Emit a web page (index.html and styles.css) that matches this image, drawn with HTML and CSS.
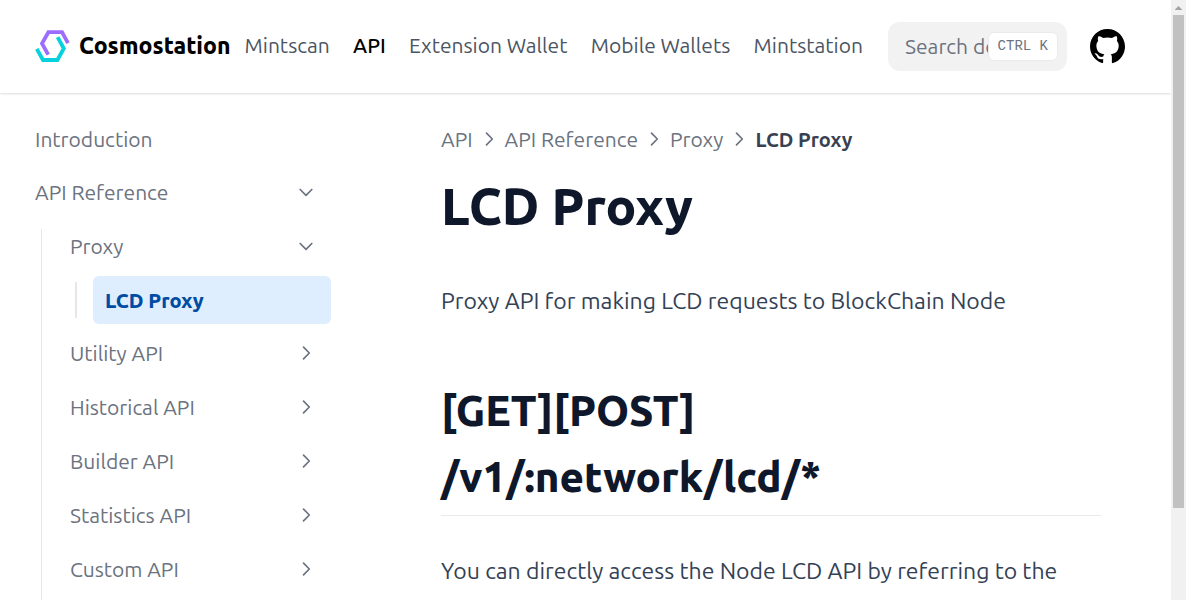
FILE: index.html
```html
<!DOCTYPE html>
<html lang="en">
<head>
<meta charset="utf-8">
<meta name="viewport" content="width=device-width, initial-scale=1">
<title>LCD Proxy – Cosmostation</title>
<link rel="stylesheet" href="styles.css">
</head>
<body>
<svg class="defs" aria-hidden="true">
  <symbol id="chevron" viewBox="0 0 24 24"><path d="M9 5l7 7-7 7" fill="none" stroke="currentColor" stroke-width="2" stroke-linecap="round" stroke-linejoin="round"/></symbol>
</svg>
<div class="page">
  <header class="topbar">
    <a class="brand" href="#">
      <svg class="brand-mark" viewBox="0 0 36 34" fill="none" stroke-width="3.8" aria-hidden="true">
        <path d="M13.2 25.6L7 14.5L13.4 3.2H27L33 14.2" stroke="#9c6cff"/>
        <path d="M1.8 19.8L8 31H22.4L28.8 19.5L22.6 8.2" stroke="#05d2dd"/>
      </svg>
      <span class="brand-name">Cosmostation</span>
    </a>
    <nav class="topnav" aria-label="Sections">
      <a href="#">Mintscan</a>
      <a class="current" href="#">API</a>
      <a href="#">Extension Wallet</a>
      <a href="#">Mobile Wallets</a>
      <a href="#">Mintstation</a>
    </nav>
    <div class="search">
      <input type="search" placeholder="Search documentation…" aria-label="Search documentation">
      <kbd>CTRL K</kbd>
    </div>
    <a class="github" href="#" aria-label="GitHub">
      <svg viewBox="0 0 16 16" fill="currentColor" aria-hidden="true"><path d="M8 0C3.58 0 0 3.58 0 8c0 3.54 2.29 6.53 5.47 7.59.4.07.55-.17.55-.38 0-.19-.01-.82-.01-1.49-2.01.37-2.53-.49-2.69-.94-.09-.23-.48-.94-.82-1.13-.28-.15-.68-.52-.01-.53.63-.01 1.08.58 1.23.82.72 1.21 1.87.87 2.33.66.07-.52.28-.87.51-1.07-1.78-.2-3.64-.89-3.64-3.95 0-.87.31-1.59.82-2.15-.08-.2-.36-1.02.08-2.12 0 0 .67-.21 2.2.82.64-.18 1.32-.27 2-.27s1.36.09 2 .27c1.53-1.04 2.2-.82 2.2-.82.44 1.1.16 1.92.08 2.12.51.56.82 1.27.82 2.15 0 3.07-1.87 3.75-3.65 3.95.29.25.54.73.54 1.48 0 1.07-.01 1.93-.01 2.2 0 .21.15.46.55.38A8.01 8.01 0 0 0 16 8c0-4.42-3.58-8-8-8z"/></svg>
    </a>
  </header>
  <div class="columns">
    <aside class="sidebar">
      <ul class="menu">
        <li><a class="item" href="#">Introduction</a></li>
        <li>
          <button class="item open" type="button" aria-expanded="true">API Reference<svg><use href="#chevron"/></svg></button>
          <ul class="menu sub">
            <li>
              <button class="item open" type="button" aria-expanded="true">Proxy<svg><use href="#chevron"/></svg></button>
              <ul class="menu leaf">
                <li><a class="item active" href="#" aria-current="page">LCD Proxy</a></li>
              </ul>
            </li>
            <li><button class="item" type="button">Utility API<svg><use href="#chevron"/></svg></button></li>
            <li><button class="item" type="button">Historical API<svg><use href="#chevron"/></svg></button></li>
            <li><button class="item" type="button">Builder API<svg><use href="#chevron"/></svg></button></li>
            <li><button class="item" type="button">Statistics API<svg><use href="#chevron"/></svg></button></li>
            <li><button class="item" type="button">Custom API<svg><use href="#chevron"/></svg></button></li>
          </ul>
        </li>
      </ul>
    </aside>
    <main class="article">
      <nav class="crumbs" aria-label="Breadcrumb">
        <span>API</span><svg><use href="#chevron"/></svg>
        <span>API Reference</span><svg><use href="#chevron"/></svg>
        <span>Proxy</span><svg><use href="#chevron"/></svg>
        <span class="here">LCD Proxy</span>
      </nav>
      <h1>LCD Proxy</h1>
      <p>Proxy API for making LCD requests to BlockChain Node</p>
      <h2>[GET][POST]<br>/v1/:network/lcd/*</h2>
      <p>You can directly access the Node LCD API by referring to the</p>
    </main>
  </div>
</div>
<div class="rail" aria-hidden="true"><div class="rail-arrow"></div><div class="rail-thumb"></div></div>
</body>
</html>
```
FILE: styles.css
```css
* { box-sizing: border-box; }

body {
  margin: 0;
  display: flex;
  height: 100vh;
  overflow: hidden;
  background: #fff;
  color: #334155;
  font-family: Ubuntu, "Noto Sans", sans-serif;
  font-size: 23px;
}

a { color: inherit; text-decoration: none; }
.defs { display: none; }
.page { flex: 1; min-width: 0; }

.topbar {
  display: flex;
  align-items: center;
  height: 93px;
  padding: 0 46px 0 35px;
  box-shadow: 0 1px 2px rgba(0, 0, 0, .14);
}

.brand { display: flex; align-items: center; gap: 8px; padding-bottom: 2px; color: #000; }
.brand-mark { width: 36px; height: 34px; }
.brand-name { font-size: 23px; font-weight: 800; }

.topnav {
  display: flex;
  flex: 1;
  justify-content: space-between;
  margin: 0 25px 0 14px;
  padding-bottom: 3px;
  color: #4b5563;
  font-size: 21px;
  white-space: nowrap;
}
.topnav .current { color: #000; font-weight: 500; }

.search { position: relative; width: 179px; }
.search input {
  width: 100%;
  height: 49px;
  padding: 0 17px 2px;
  border: 0;
  border-radius: 12px;
  background: #f2f2f2;
  color: #6b7280;
  font: inherit;
  font-size: 21px;
}
.search input::placeholder { color: #6b7280; }
.search kbd {
  position: absolute;
  top: 10px;
  right: 9px;
  height: 29px;
  padding: 0 9px;
  border: 1px solid #e8eaee;
  border-radius: 6px;
  background: #fff;
  color: #6b7280;
  font: 14px/26px "Liberation Mono", monospace;
}

.github { margin-left: 23px; color: #000; }
.github svg { display: block; width: 35px; height: 35px; }

.columns { display: flex; }

.sidebar { width: 346px; padding: 23px 15px 0 23px; color: #6b7280; font-size: 21px; }
.menu { display: grid; gap: 5px; margin: 0; padding: 0; list-style: none; }
.sub { position: relative; gap: 6px; margin: 6px 0 0 18px; padding: 0 0 24px 17px; }
.sub::before { content: ""; position: absolute; top: 6px; bottom: 0; left: 0; width: 1px; background: #e5e7eb; }
.leaf { position: relative; margin: 5px 0 0 17px; padding-left: 18px; }
.leaf::before { content: ""; position: absolute; top: 6px; bottom: 6px; left: 0; width: 2px; background: #e5e7eb; }

.item {
  display: flex;
  align-items: center;
  justify-content: space-between;
  width: 100%;
  height: 48px;
  padding: 0 12px 2px;
  border: 0;
  border-radius: 6px;
  background: none;
  color: inherit;
  font: inherit;
}
.item svg { width: 26px; height: 20px; }
.item.open svg { transform: rotate(90deg); }
.item.active { padding-bottom: 0; background: #dfeeff; color: #004ca3; font-size: 20px; font-weight: 800; }

.article { flex: 1; min-width: 0; padding: 31px 70px 0 95px; }

.crumbs {
  display: flex;
  align-items: center;
  gap: 6px;
  height: 30px;
  color: #6b7280;
  font-size: 21px;
  white-space: nowrap;
}
.crumbs svg { width: 20px; height: 20px; }
.crumbs .here { color: #374151; font-size: 20px; font-weight: 600; }

h1 { margin: 23px 0 0; color: #0f172a; font-size: 51px; font-weight: 800; line-height: 58px; }
p { margin: 46px 0 0; line-height: 40px; }
h2 {
  margin: 57px 0 35px;
  padding-bottom: 5px;
  border-bottom: 1px solid #e8eaed;
  color: #0f172a;
  font-size: 42px;
  font-weight: 800;
  line-height: 66px;
}
h2 + p { margin: 0; }

.rail { width: 15px; padding: 6px 2px 0; background: #f1f1f1; }
.rail-arrow {
  width: 8px;
  height: 4px;
  margin: 0 auto 5px;
  background: #a3a3a3;
  clip-path: polygon(50% 0, 100% 100%, 0 100%);
}
.rail-thumb { height: 83%; background: #c1c1c1; }
```
